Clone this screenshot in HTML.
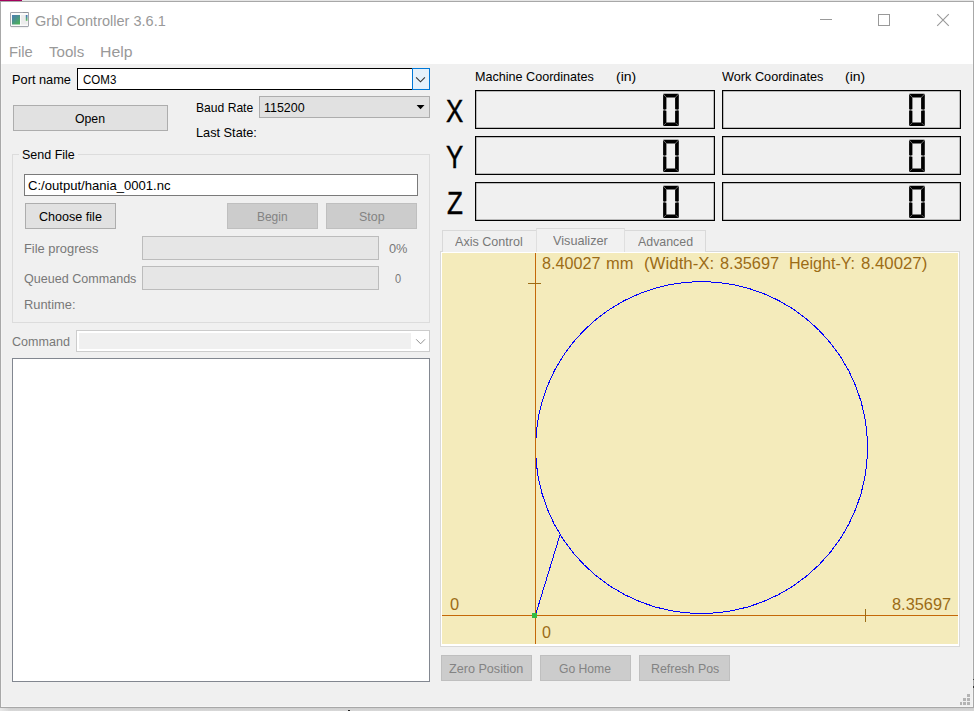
<!DOCTYPE html>
<html lang="en">
<head>
<meta charset="utf-8">
<title>Grbl Controller 3.6.1</title>
<style>
html,body{margin:0;padding:0;}
body{width:974px;height:711px;overflow:hidden;background:#dedede;font-family:"Liberation Sans",sans-serif;position:relative;}
#win{position:absolute;left:0;top:0;width:974px;height:711px;overflow:hidden;}
#win div,#win span,#win svg{position:absolute;box-sizing:border-box;}
.t{white-space:pre;transform-origin:0 0;display:block;}
.btn{background:#e1e1e1;border:1px solid #adadad;}
.btnd{background:#cccccc;border:1px solid #bfbfbf;}
.lcd{background:#f0f0f0;border:1px solid #000;box-shadow:inset 0 0 0 0.5px rgba(0,0,0,.45);}
.prog{background:#e6e6e6;border:1px solid #bcbcbc;}
</style>
</head>
<body>
<div id="win">
<div class="bg" style="left:0px;top:0px;width:974px;height:711px;background:#d6d6d6;"></div>
<div class="bg" style="left:0px;top:0px;width:974px;height:1px;background:#e6e6e6;"></div>
<div class="bg" style="left:0px;top:1px;width:974px;height:1px;background:#a6a6a6;"></div>
<div class="bg" style="left:0px;top:0px;width:22px;height:2px;background:#9b0059;"></div>
<div class="bg" style="left:0px;top:1px;width:974px;height:707px;background:#a8a8a8;"></div>
<div class="bg" style="left:0px;top:0px;width:974px;height:1px;background:#e6e6e6;"></div>
<div class="bg" style="left:0px;top:0px;width:22px;height:1.4px;background:#a3005c;"></div>
<div class="titlebar" style="left:1px;top:2px;width:972px;height:62px;background:#ffffff;"></div>
<div class="client" style="left:1px;top:64px;width:972px;height:643px;background:#f0f0f0;"></div>
<div class="hl" style="left:1px;top:64px;width:1px;height:643px;background:#f4f4f4;"></div>
<div class="hl" style="left:972px;top:64px;width:1px;height:643px;background:#f4f4f4;"></div>
<div class="hl" style="left:1px;top:706px;width:972px;height:1px;background:#f5f5f5;"></div>
<div class="bg" style="left:0px;top:708px;width:974px;height:3px;background:linear-gradient(#cecece,#d8d8d8);"></div>
<div class="bg" style="left:0px;top:708px;width:10px;height:3px;background:linear-gradient(90deg,#e8e8e8,rgba(232,232,232,0));"></div>
<div class="mark" style="left:347.6px;top:710px;width:2.2px;height:1px;background:#222;"></div>
<svg style="left:10px;top:12px" width="20" height="17" viewBox="0 0 20 17">
<defs><linearGradient id="ig" x1="0" y1="0" x2="0.7" y2="1"><stop offset="0" stop-color="#4c7db6"/><stop offset="0.45" stop-color="#4a8f90"/><stop offset="1" stop-color="#4cb05c"/></linearGradient>
<linearGradient id="ig2" x1="0" y1="0" x2="0" y2="1"><stop offset="0" stop-color="#3f6fc0"/><stop offset="1" stop-color="#62c45c"/></linearGradient></defs>
<rect x="1" y="15.2" width="17" height="1" fill="#efefef"/>
<rect x="0.5" y="0.5" width="18" height="14" rx="0.4" fill="#fbfbfb" stroke="#a3a6ad"/>
<rect x="13" y="0.2" width="5.5" height="0.8" fill="#8d9097"/>
<rect x="2" y="3" width="8" height="9.5" fill="url(#ig)"/>
<rect x="11" y="3" width="6.6" height="9.5" fill="#ececec"/>
<rect x="15.8" y="3" width="1.7" height="5.8" fill="url(#ig2)"/>
</svg>
<span class="t" style="left:35.10px;top:14px;font-size:14.8px;line-height:14.8px;color:#999999;transform:scaleX(0.9814);">Grbl Controller 3.6.1</span>
<div class="wb" style="left:820px;top:19px;width:12px;height:1px;background:#999;"></div>
<div class="wb" style="left:878px;top:14px;width:12px;height:12px;border:1px solid #999;"></div>
<svg style="left:936px;top:13px" width="14" height="14" viewBox="0 0 14 14"><path d="M1.2 1.2 L12.8 12.8 M12.8 1.2 L1.2 12.8" stroke="#999" stroke-width="1.1" fill="none"/></svg>
<span class="t" style="left:9.40px;top:44px;font-size:15.4px;line-height:15.4px;color:#999999;transform:scaleX(0.9599);">File</span>
<span class="t" style="left:49.30px;top:44px;font-size:15.4px;line-height:15.4px;color:#999999;transform:scaleX(0.9817);">Tools</span>
<span class="t" style="left:100.00px;top:44px;font-size:15.4px;line-height:15.4px;color:#999999;transform:scaleX(1.0270);">Help</span>
<span class="t" style="left:12.30px;top:73px;font-size:13px;line-height:13px;color:#000000;transform:scaleX(0.9834);">Port name</span>
<div class="combo" style="left:77px;top:68px;width:353px;height:22px;background:#fff;border:1px solid #000;"></div>
<div class="cbtn" style="left:412px;top:68px;width:18px;height:22px;background:#e5f1fb;border:1px solid #0078d7;"></div>
<svg style="left:414px;top:74px" width="14" height="11" viewBox="414 74 14 11"><path d="M416.1 77.3 L420.5 81.8 L424.9 77.3" stroke="#333" stroke-width="1.1" fill="none"/></svg>
<span class="t" style="left:83.00px;top:73px;font-size:13px;line-height:13px;color:#000000;transform:scaleX(0.8863);">COM3</span>
<div class="btn" style="left:13px;top:105px;width:155px;height:26px;"></div>
<span class="t" style="left:75.20px;top:112px;font-size:13px;line-height:13px;color:#000000;transform:scaleX(0.9438);">Open</span>
<span class="t" style="left:195.60px;top:101px;font-size:13px;line-height:13px;color:#000000;transform:scaleX(0.9312);">Baud Rate</span>
<div class="btn" style="left:259px;top:96px;width:171px;height:22px;"></div>
<span class="t" style="left:263.80px;top:101px;font-size:13px;line-height:13px;color:#000000;transform:scaleX(0.9589);">115200</span>
<svg style="left:415px;top:103px" width="12" height="8" viewBox="415 103 12 8"><path d="M416.6 105 L424.5 105 L420.55 109.3 Z" fill="#000"/></svg>
<span class="t" style="left:195.60px;top:126px;font-size:13px;line-height:13px;color:#000000;transform:scaleX(0.9800);">Last State:</span>
<div class="grp" style="left:12px;top:154px;width:418px;height:169px;border:1px solid #dcdcdc;"></div>
<div class="grpgap" style="left:19px;top:150px;width:59px;height:10px;background:#f0f0f0;"></div>
<span class="t" style="left:22.20px;top:148px;font-size:13px;line-height:13px;color:#000000;transform:scaleX(0.9613);">Send File</span>
<div class="edit" style="left:24px;top:174px;width:394px;height:22px;background:#fff;border:1px solid #7a7a7a;"></div>
<span class="t" style="left:28.30px;top:179px;font-size:13px;line-height:13px;color:#000000;transform:scaleX(1.0064);">C:/output/hania_0001.nc</span>
<div class="btn" style="left:25px;top:203px;width:91px;height:26px;"></div>
<span class="t" style="left:39.40px;top:210px;font-size:13px;line-height:13px;color:#000000;transform:scaleX(0.9667);">Choose file</span>
<div class="btnd" style="left:227px;top:203px;width:91px;height:26px;"></div>
<span class="t" style="left:257.40px;top:210px;font-size:13px;line-height:13px;color:#838383;transform:scaleX(0.9195);">Begin</span>
<div class="btnd" style="left:326px;top:203px;width:91px;height:26px;"></div>
<span class="t" style="left:358.50px;top:210px;font-size:13px;line-height:13px;color:#838383;transform:scaleX(0.9583);">Stop</span>
<span class="t" style="left:24.20px;top:242px;font-size:13px;line-height:13px;color:#787878;transform:scaleX(0.9915);">File progress</span>
<div class="prog" style="left:142px;top:236px;width:237px;height:24px;"></div>
<span class="t" style="left:388.50px;top:242px;font-size:13px;line-height:13px;color:#787878;transform:scaleX(0.9848);">0%</span>
<span class="t" style="left:24.20px;top:272px;font-size:13px;line-height:13px;color:#787878;transform:scaleX(0.9661);">Queued Commands</span>
<div class="prog" style="left:142px;top:266px;width:237px;height:24px;"></div>
<span class="t" style="left:394.70px;top:272px;font-size:13px;line-height:13px;color:#787878;transform:scaleX(0.8455);">0</span>
<span class="t" style="left:24.20px;top:298px;font-size:13px;line-height:13px;color:#787878;transform:scaleX(0.9904);">Runtime:</span>
<span class="t" style="left:12.20px;top:335px;font-size:13px;line-height:13px;color:#787878;transform:scaleX(0.9651);">Command</span>
<div class="combod" style="left:76px;top:330px;width:354px;height:22px;background:#fff;border:1px solid #cccccc;"></div>
<div class="combodi" style="left:79px;top:333px;width:332px;height:16px;background:#f0f0f0;"></div>
<svg style="left:414px;top:336px" width="14" height="11" viewBox="414 336 14 11"><path d="M416.2 339.3 L420.6 343.8 L425 339.3" stroke="#909090" stroke-width="1" fill="none"/></svg>
<div class="log" style="left:12px;top:358px;width:418px;height:324px;background:#fff;border:1px solid #828790;"></div>
<span class="t" style="left:475.10px;top:70px;font-size:13px;line-height:13px;color:#000000;transform:scaleX(0.9678);">Machine Coordinates</span>
<span class="t" style="left:616.20px;top:70px;font-size:13px;line-height:13px;color:#000000;transform:scaleX(1.0753);">(in)</span>
<span class="t" style="left:721.80px;top:70px;font-size:13px;line-height:13px;color:#000000;transform:scaleX(0.9768);">Work Coordinates</span>
<span class="t" style="left:845.40px;top:70px;font-size:13px;line-height:13px;color:#000000;transform:scaleX(1.0753);">(in)</span>
<span class="t" style="left:446.00px;top:96px;font-size:31.5px;line-height:31.5px;color:#000000;transform:scaleX(0.8211);-webkit-text-stroke:0.45px #000;">X</span>
<span class="t" style="left:446.00px;top:142px;font-size:31.5px;line-height:31.5px;color:#000000;transform:scaleX(0.8211);-webkit-text-stroke:0.45px #000;">Y</span>
<span class="t" style="left:446.70px;top:188px;font-size:31.5px;line-height:31.5px;color:#000000;transform:scaleX(0.8275);-webkit-text-stroke:0.45px #000;">Z</span>
<div class="lcd" style="left:475px;top:90px;width:240px;height:39px;"><svg style="left:187px;top:2px" width="17" height="35" viewBox="0 0 17 35"><g fill="#000" transform="translate(0.1,0.8)"><polygon points="0.22,0.00 15.48,0.00 11.93,3.70 3.37,3.70"/><polygon points="0.22,32.30 15.48,32.30 11.93,28.60 3.37,28.60"/><polygon points="0.00,0.22 3.30,3.92 3.30,15.43 1.20,15.93 0.00,15.53"/><polygon points="0.00,32.08 3.30,28.38 3.30,16.87 1.20,16.37 0.00,16.77"/><polygon points="15.70,0.22 12.00,3.92 12.00,15.43 14.50,15.93 15.70,15.53"/><polygon points="15.70,32.08 12.00,28.38 12.00,16.87 14.50,16.37 15.70,16.77"/></g></svg></div>
<div class="lcd" style="left:722px;top:90px;width:239px;height:39px;"><svg style="left:186px;top:2px" width="17" height="35" viewBox="0 0 17 35"><g fill="#000" transform="translate(0.1,0.8)"><polygon points="0.22,0.00 15.48,0.00 11.93,3.70 3.37,3.70"/><polygon points="0.22,32.30 15.48,32.30 11.93,28.60 3.37,28.60"/><polygon points="0.00,0.22 3.30,3.92 3.30,15.43 1.20,15.93 0.00,15.53"/><polygon points="0.00,32.08 3.30,28.38 3.30,16.87 1.20,16.37 0.00,16.77"/><polygon points="15.70,0.22 12.00,3.92 12.00,15.43 14.50,15.93 15.70,15.53"/><polygon points="15.70,32.08 12.00,28.38 12.00,16.87 14.50,16.37 15.70,16.77"/></g></svg></div>
<div class="lcd" style="left:475px;top:136px;width:240px;height:39px;"><svg style="left:187px;top:2px" width="17" height="35" viewBox="0 0 17 35"><g fill="#000" transform="translate(0.1,0.8)"><polygon points="0.22,0.00 15.48,0.00 11.93,3.70 3.37,3.70"/><polygon points="0.22,32.30 15.48,32.30 11.93,28.60 3.37,28.60"/><polygon points="0.00,0.22 3.30,3.92 3.30,15.43 1.20,15.93 0.00,15.53"/><polygon points="0.00,32.08 3.30,28.38 3.30,16.87 1.20,16.37 0.00,16.77"/><polygon points="15.70,0.22 12.00,3.92 12.00,15.43 14.50,15.93 15.70,15.53"/><polygon points="15.70,32.08 12.00,28.38 12.00,16.87 14.50,16.37 15.70,16.77"/></g></svg></div>
<div class="lcd" style="left:722px;top:136px;width:239px;height:39px;"><svg style="left:186px;top:2px" width="17" height="35" viewBox="0 0 17 35"><g fill="#000" transform="translate(0.1,0.8)"><polygon points="0.22,0.00 15.48,0.00 11.93,3.70 3.37,3.70"/><polygon points="0.22,32.30 15.48,32.30 11.93,28.60 3.37,28.60"/><polygon points="0.00,0.22 3.30,3.92 3.30,15.43 1.20,15.93 0.00,15.53"/><polygon points="0.00,32.08 3.30,28.38 3.30,16.87 1.20,16.37 0.00,16.77"/><polygon points="15.70,0.22 12.00,3.92 12.00,15.43 14.50,15.93 15.70,15.53"/><polygon points="15.70,32.08 12.00,28.38 12.00,16.87 14.50,16.37 15.70,16.77"/></g></svg></div>
<div class="lcd" style="left:475px;top:182px;width:240px;height:39px;"><svg style="left:187px;top:2px" width="17" height="35" viewBox="0 0 17 35"><g fill="#000" transform="translate(0.1,0.8)"><polygon points="0.22,0.00 15.48,0.00 11.93,3.70 3.37,3.70"/><polygon points="0.22,32.30 15.48,32.30 11.93,28.60 3.37,28.60"/><polygon points="0.00,0.22 3.30,3.92 3.30,15.43 1.20,15.93 0.00,15.53"/><polygon points="0.00,32.08 3.30,28.38 3.30,16.87 1.20,16.37 0.00,16.77"/><polygon points="15.70,0.22 12.00,3.92 12.00,15.43 14.50,15.93 15.70,15.53"/><polygon points="15.70,32.08 12.00,28.38 12.00,16.87 14.50,16.37 15.70,16.77"/></g></svg></div>
<div class="lcd" style="left:722px;top:182px;width:239px;height:39px;"><svg style="left:186px;top:2px" width="17" height="35" viewBox="0 0 17 35"><g fill="#000" transform="translate(0.1,0.8)"><polygon points="0.22,0.00 15.48,0.00 11.93,3.70 3.37,3.70"/><polygon points="0.22,32.30 15.48,32.30 11.93,28.60 3.37,28.60"/><polygon points="0.00,0.22 3.30,3.92 3.30,15.43 1.20,15.93 0.00,15.53"/><polygon points="0.00,32.08 3.30,28.38 3.30,16.87 1.20,16.37 0.00,16.77"/><polygon points="15.70,0.22 12.00,3.92 12.00,15.43 14.50,15.93 15.70,15.53"/><polygon points="15.70,32.08 12.00,28.38 12.00,16.87 14.50,16.37 15.70,16.77"/></g></svg></div>
<div class="pane" style="left:440px;top:251px;width:520px;height:396px;background:#fff;border:1px solid #d9d9d9;"></div>
<div class="tab" style="left:442px;top:230px;width:95px;height:22px;background:#f0f0f0;border:1px solid #d9d9d9;border-bottom:none;"></div>
<div class="tab" style="left:624px;top:230px;width:82px;height:22px;background:#f0f0f0;border:1px solid #d9d9d9;border-bottom:none;"></div>
<div class="tabsel" style="left:536px;top:228px;width:89px;height:24px;background:#f1f1f1;border:1px solid #dfdfdf;border-top-color:#d9d9d9;border-bottom:none;"></div>
<span class="t" style="left:455.30px;top:235px;font-size:13px;line-height:13px;color:#787878;transform:scaleX(0.9662);">Axis Control</span>
<span class="t" style="left:553.30px;top:234px;font-size:13px;line-height:13px;color:#787878;transform:scaleX(0.9769);">Visualizer</span>
<span class="t" style="left:638.10px;top:235px;font-size:13px;line-height:13px;color:#787878;transform:scaleX(0.9525);">Advanced</span>
<svg style="left:442px;top:253px" width="516" height="391" viewBox="442 253 516 391">
<rect x="442" y="253" width="516" height="391" fill="#f4ebbb"/>
<g shape-rendering="crispEdges" fill="none" stroke="#0000ff" stroke-width="1">
<circle cx="701.55" cy="447.55" r="166"/>
</g>
<rect x="535" y="253" width="1" height="391" fill="#c46808"/>
<rect x="442" y="615" width="516" height="1" fill="#c46808"/>
<rect x="528" y="283" width="13" height="1" fill="#9c6c16"/>
<rect x="865" y="609" width="1" height="13" fill="#9c6c16"/>
<g shape-rendering="crispEdges" fill="none" stroke="#0000ff" stroke-width="1">
<line x1="535.5" y1="615" x2="560.2" y2="534.2"/>
</g>
<rect x="532" y="613" width="5" height="5" fill="#33bb44"/>
</svg>
<span class="t" style="left:542.30px;top:256px;font-size:16px;line-height:16px;color:#9c6c16;transform:scaleX(1.0097);">8.40027</span>
<span class="t" style="left:606.40px;top:256px;font-size:16px;line-height:16px;color:#9c6c16;transform:scaleX(1.0285);">mm</span>
<span class="t" style="left:643.70px;top:256px;font-size:16px;line-height:16px;color:#9c6c16;transform:scaleX(1.0534);">(Width-X:</span>
<span class="t" style="left:720.30px;top:256px;font-size:16px;line-height:16px;color:#9c6c16;transform:scaleX(1.0218);">8.35697</span>
<span class="t" style="left:788.60px;top:256px;font-size:16px;line-height:16px;color:#9c6c16;transform:scaleX(1.0039);">Height-Y:</span>
<span class="t" style="left:861.20px;top:256px;font-size:16px;line-height:16px;color:#9c6c16;transform:scaleX(1.0491);">8.40027)</span>
<span class="t" style="left:450.00px;top:597px;font-size:16px;line-height:16px;color:#9c6c16;transform:scaleX(1.0248);">0</span>
<span class="t" style="left:892.10px;top:597px;font-size:16px;line-height:16px;color:#9c6c16;transform:scaleX(1.0218);">8.35697</span>
<span class="t" style="left:542.20px;top:625px;font-size:16px;line-height:16px;color:#9c6c16;transform:scaleX(1.0023);">0</span>
<div class="btnd" style="left:441px;top:655px;width:91px;height:26px;"></div>
<span class="t" style="left:448.90px;top:662px;font-size:13px;line-height:13px;color:#838383;transform:scaleX(0.9704);">Zero Position</span>
<div class="btnd" style="left:540px;top:655px;width:91px;height:26px;"></div>
<span class="t" style="left:559.20px;top:662px;font-size:13px;line-height:13px;color:#838383;transform:scaleX(0.9346);">Go Home</span>
<div class="btnd" style="left:639px;top:655px;width:91px;height:26px;"></div>
<span class="t" style="left:650.50px;top:662px;font-size:13px;line-height:13px;color:#838383;transform:scaleX(0.9544);">Refresh Pos</span>
<div class="grip" style="left:967px;top:694px;width:3px;height:3px;background:#b4b4b4;"></div>
<div class="grip" style="left:963px;top:698px;width:3px;height:3px;background:#b4b4b4;"></div>
<div class="grip" style="left:967px;top:698px;width:3px;height:3px;background:#b4b4b4;"></div>
<div class="grip" style="left:959.8px;top:702px;width:2.2px;height:3px;background:#b4b4b4;"></div>
<div class="grip" style="left:963px;top:702px;width:3px;height:3px;background:#b4b4b4;"></div>
<div class="grip" style="left:967px;top:702px;width:3px;height:3px;background:#b4b4b4;"></div>
<div class="mark" style="left:972.6px;top:686.3px;width:1.4px;height:2px;background:#333;"></div>
<div class="mark" style="left:972.8px;top:678.6px;width:1.2px;height:1.4px;background:#444;"></div>
</div>
</body>
</html>
